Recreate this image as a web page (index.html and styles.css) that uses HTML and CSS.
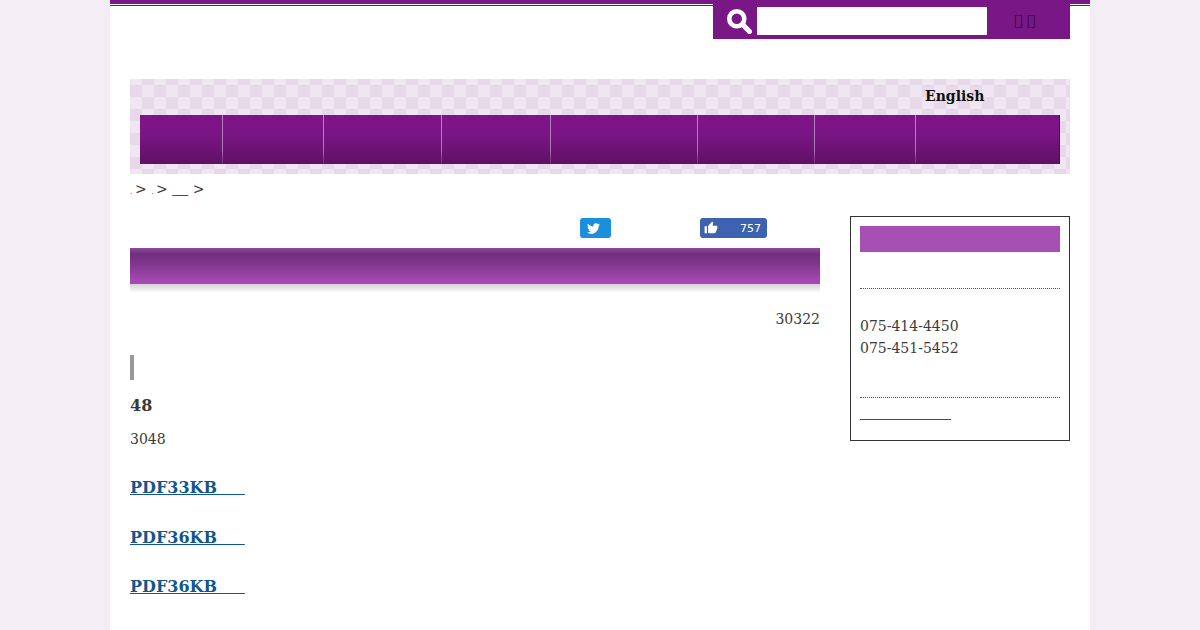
FILE: index.html
```html
<!DOCTYPE html>
<html lang="ja">
<head>
  <meta charset="UTF-8" />
  <title>PDF</title>
  <link rel="stylesheet" href="styles.css">
</head>
<body>
  <div class="page">
    <div class="top-bar">
      <form class="search">
        <svg class="search-icon" viewBox="0 0 24 24" aria-hidden="true">
          <circle cx="9.4" cy="9.4" r="7.2" fill="none" stroke="#fff" stroke-width="4.4"/>
          <path d="M15 15L21.6 21.6" stroke="#fff" stroke-width="4.8" stroke-linecap="round"/>
        </svg>
        <input class="search-input" type="text">
        <span class="search-btn">&#xE0FF; &#xE0FF;</span>
      </form>
    </div>

    <header class="banner">
      <div class="lang"><a href="#">English</a></div>
      <nav class="gnav">
        <a href="#" style="width:83px"></a>
        <a href="#" style="width:101px"></a>
        <a href="#" style="width:118px"></a>
        <a href="#" style="width:109px"></a>
        <a href="#" style="width:147px"></a>
        <a href="#" style="width:117px"></a>
        <a href="#" style="width:101px"></a>
        <a href="#" style="width:143px"></a>
      </nav>
    </header>

    <div class="crumbs"><a href="#" class="dot">.</a>&gt; <a href="#" class="dot">.</a>&gt; <a href="#" class="crumb-link">&nbsp;&nbsp;&nbsp;</a> &gt;</div>

    <div class="columns">
      <main class="content">
        <div class="social">
          <a href="#" class="btn-tw">
            <svg viewBox="0 0 24 24" aria-hidden="true"><path d="M23.953 4.57a10 10 0 01-2.825.775 4.958 4.958 0 002.163-2.723c-.951.555-2.005.959-3.127 1.184a4.92 4.92 0 00-8.384 4.482C7.69 8.095 4.067 6.13 1.64 3.162a4.822 4.822 0 00-.666 2.475c0 1.71.87 3.213 2.188 4.096a4.904 4.904 0 01-2.228-.616v.06a4.923 4.923 0 003.946 4.827 4.996 4.996 0 01-2.212.085 4.936 4.936 0 004.604 3.417 9.867 9.867 0 01-6.102 2.105c-.39 0-.779-.023-1.17-.067a13.995 13.995 0 007.557 2.209c9.053 0 13.998-7.496 13.998-13.985 0-.21 0-.42-.015-.63A9.935 9.935 0 0024 4.59z"/></svg>
          </a>
          <a href="#" class="btn-fb">
            <svg viewBox="0 0 24 24" aria-hidden="true"><path d="M1 21h4V9H1v12zm22-11c0-1.1-.9-2-2-2h-6.31l.95-4.57.03-.32c0-.41-.17-.79-.44-1.06L14.17 1 7.59 7.59C7.22 7.95 7 8.45 7 9v10c0 1.1.9 2 2 2h9c.83 0 1.54-.5 1.8-1.22l3.02-7.05c.08-.23.12-.47.12-.73v-2z"/></svg>
            <span>757</span>
          </a>
        </div>
        <h1 class="title-bar"></h1>
        <p class="date">30322</p>
        <h2 class="sub-head"></h2>
        <h3 class="num-head">48</h3>
        <p class="body-text">3048</p>
        <p class="pdf"><a href="#">PDF33KB&nbsp;&nbsp;&nbsp;&nbsp;&nbsp;</a></p>
        <p class="pdf"><a href="#">PDF36KB&nbsp;&nbsp;&nbsp;&nbsp;&nbsp;</a></p>
        <p class="pdf"><a href="#">PDF36KB&nbsp;&nbsp;&nbsp;&nbsp;&nbsp;</a></p>
      </main>

      <aside class="side">
        <h2 class="side-head"></h2>
        <div class="side-block"></div>
        <div class="side-tel">075-414-4450<br>075-451-5452</div>
        <div class="side-link"><a href="#">&nbsp;&nbsp;&nbsp;&nbsp;&nbsp;&nbsp;&nbsp;&nbsp;&nbsp;&nbsp;&nbsp;&nbsp;&nbsp;&nbsp;&nbsp;&nbsp;&nbsp;&nbsp;&nbsp;&nbsp;</a></div>
      </aside>
    </div>
  </div>
</body>
</html>
```

FILE: styles.css
```css
/* Reset */
* {
  margin: 0; padding: 0; box-sizing: border-box;
}
html, body {
  height: 100%;
}
body {
  background: #f3edf5;
  color: #3a3a3a;
  font-family: "DejaVu Serif", serif;
  font-size: 14px;
  overflow: hidden;
}
a {
  color: #11568c;
}
.page {
  width: 980px;
  min-height: 100%;
  margin: 0 auto;
  padding: 0 20px;
  background: linear-gradient(#7a1786 0 4px, #fff 4px 5px, #5f1a6c 5px 6px, #fff 6px);
}
/* search */
.top-bar {
  display: flex;
  justify-content: flex-end;
  height: 79px;
}
.search {
  display: flex;
  align-items: flex-start;
  width: 357px;
  height: 39px;
  padding: 7px 0 0 14px;
  background: #7a1786;
}
.search-icon {
  width: 25px;
  height: 25px;
  margin-top: 2px;
}
.search-input {
  width: 230px;
  height: 28px;
  margin-left: 5px;
  border: none;
  background: #fff;
}
.search-btn {
  margin: 3px 0 0 27px;
  color: #2a0a33;
  line-height: 20px;
}
/* banner */
.banner {
  height: 95px;
  padding: 0 10px;
  background-color: #f0e6f1;
  background-image: conic-gradient(#e8d9ea 25%, transparent 0 50%, #e8d9ea 0 75%, transparent 0);
  background-size: 24px 24px;
  background-position: 0 -6px;
}
.lang {
  height: 36px;
  padding: 8px 0 0 785px;
  line-height: 18px;
  font-weight: 700;
}
.lang a {
  color: #111;
  text-decoration: none;
}
.gnav {
  display: flex;
  height: 49px;
  background: linear-gradient(#7f1488, #7a1585 40%, #5f1165);
  border-right: 1px solid #4a0f50;
}
.gnav a {
  display: block;
  border-right: 1px solid;
  border-image: linear-gradient(#b98bc0, #a77aaf 70%, #6a2272) 1;
}
.gnav a:last-child {
  border-right: none;
}
/* breadcrumb */
.crumbs {
  height: 42px;
  padding-top: 5px;
  line-height: 20px;
}
.crumbs .dot {
  margin-right: 2.4px;
  text-decoration: none;
  color: #3a3a3a;
  font-size: 8px;
}
.crumb-link {
  letter-spacing: 0.9px;
}
/* columns */
.columns {
  display: flex;
  justify-content: space-between;
  align-items: flex-start;
}
.content {
  width: 690px;
}
.social {
  position: relative;
  height: 32px;
}
.btn-tw, .btn-fb {
  position: absolute;
  top: 2px;
  display: flex;
  align-items: center;
  height: 20px;
  border-radius: 3px;
  color: #fff;
  text-decoration: none;
}
.btn-tw {
  left: 450px;
  width: 31px;
  padding-left: 7px;
  background: #1b8fdc;
}
.btn-tw svg {
  width: 13px;
  height: 13px;
  fill: #fff;
}
.btn-fb {
  left: 570px;
  width: 67px;
  padding: 0 6px 0 4px;
  background: #3d63b0;
}
.btn-fb svg {
  width: 14px;
  height: 14px;
  fill: #fff;
}
.btn-fb span {
  margin-left: auto;
  font-family: "DejaVu Sans", sans-serif;
  font-size: 11px;
}
.title-bar {
  height: 45px;
  background: linear-gradient(#9346a0, #70307c 6px, #7d3589 14px, #a648b4 33px, #a648b4 36px, #d2d2d2 36px, #fff 45px);
}
.date {
  margin-top: 15px;
  text-align: right;
  line-height: 22px;
}
.sub-head {
  width: 4px;
  height: 25px;
  margin-top: 25px;
  background: #999;
}
.num-head {
  margin-top: 15px;
  font-size: 16px;
  line-height: 22px;
}
.body-text {
  margin-top: 11px;
  line-height: 22px;
}
.pdf {
  margin-top: 26px;
  font-size: 16px;
  font-weight: 700;
  line-height: 23.5px;
}
/* sidebar */
.side {
  width: 220px;
  height: 225px;
  padding: 9px;
  border: 1px solid #333;
}
.side-head {
  height: 26px;
  background: #a84fb5;
}
.side-block {
  height: 37px;
  border-bottom: 1px dotted #555;
}
.side-tel {
  height: 109px;
  padding-top: 26px;
  line-height: 22px;
  border-bottom: 1px dotted #555;
}
.side-link {
  padding-top: 4px;
  line-height: 22px;
  letter-spacing: 0.1px;
}
```
